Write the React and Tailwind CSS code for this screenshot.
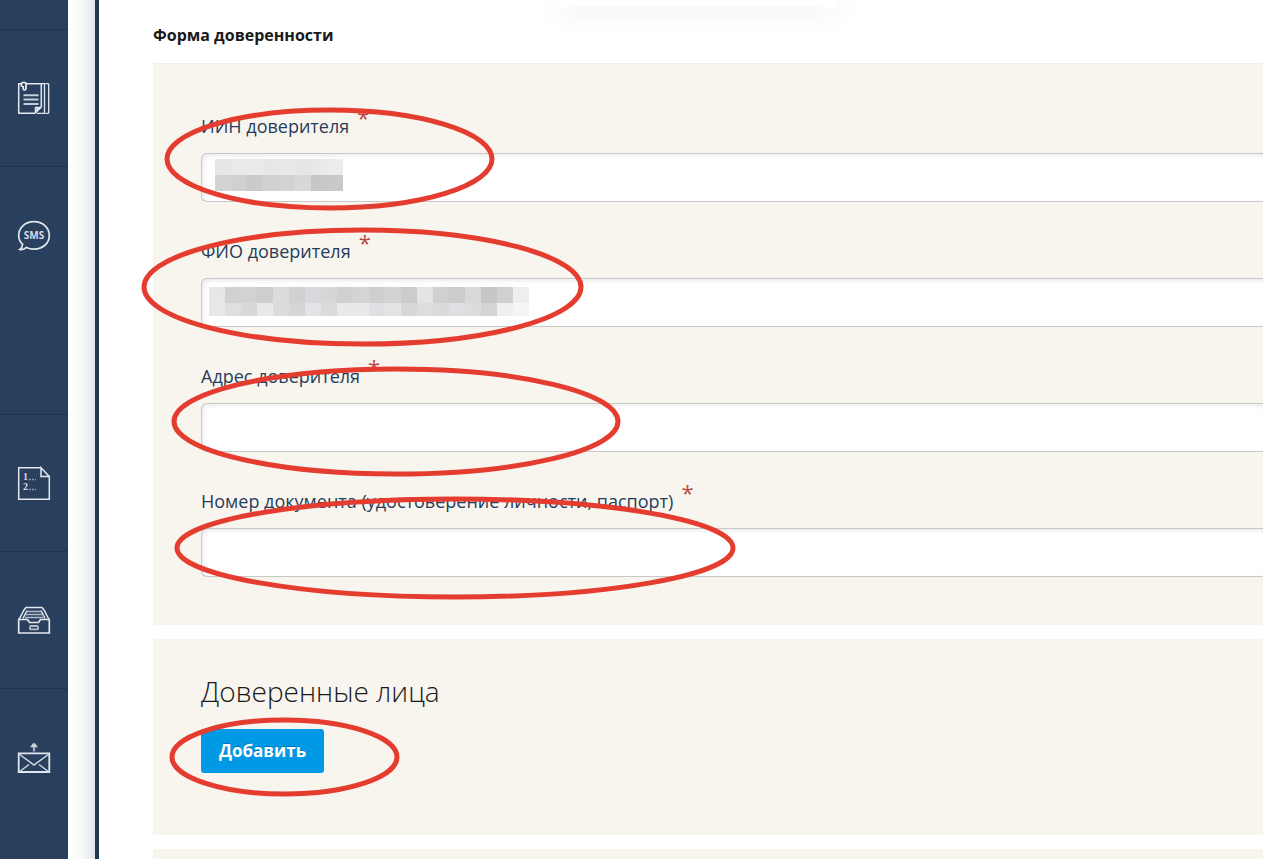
import clsx from "clsx";

const idTiles = [
  ["#e6e6e6", "#e9ebea", "#ebebeb", "#e7e7e7", "#e9e9e9", "#e6e6e4", "#e9e9e9", "#ececec"],
  ["#d3d3d3", "#cfd1d0", "#cbcbca", "#d1d1d2", "#d3d3d3", "#d8d8d6", "#c7c7c8", "#c8c9cb"],
];

const nameTiles = [
  ["#e7e7e6", "#d1d1d1", "#d2d2d2", "#cecece", "#dddcda", "#d1d1d1", "#d8d9dc", "#d6d6d6", "#d0d0cf", "#d3d5d4", "#cfcfcf", "#d3d3d3", "#cccccc", "#e4e4e2", "#d0d0d0", "#cbccce", "#d9d9d9", "#c7c7c5", "#d0d0d0", "#eeeeee"],
  ["#e8e8e8", "#dfdfdf", "#d8d8d8", "#e7eae9", "#dddcda", "#d6d6d6", "#e2e3e6", "#dbdbdb", "#e9e9e9", "#e9e9e9", "#dfe0e3", "#e4e4e4", "#d8d7d5", "#dcdddd", "#dadada", "#dfe0e3", "#dbdddc", "#d5d4d2", "#eeeff1", "#f5f5f5"],
];

// hidden personal data
function Mosaic({ tiles, height, className }) {
  return (
    <svg
      className={clsx("absolute", className)}
      width={tiles[0].length * 16}
      height={height}
      shapeRendering="crispEdges"
    >
      {tiles.map((row, y) =>
        row.map((fill, x) => (
          <rect key={`${x}-${y}`} x={x * 16} y={y * 16} width="16" height="16" fill={fill} />
        ))
      )}
    </svg>
  );
}

// red marker around a field
function Ring({ width, height, className }) {
  return (
    <svg
      className={clsx("absolute pointer-events-none z-10", className)}
      width={width}
      height={height}
      fill="none"
    >
      <ellipse
        cx={width / 2}
        cy={height / 2}
        rx={width / 2 - 3}
        ry={height / 2 - 3}
        stroke="#e53c30"
        strokeWidth="5"
      />
    </svg>
  );
}

function Icon({ children }) {
  return (
    <svg width="34" height="36" viewBox="0 0 34 36" fill="none" stroke="#e3e8ee" strokeWidth="1.5">
      {children}
    </svg>
  );
}

function DocsIcon() {
  return (
    <Icon>
      <path d="M4 2.7H1.7V32.3H18L24.3 26V2.7H9" />
      <path d="M18.5 32V26.5H24" />
      <path d="M19 31.5L24 26.5L19.5 26.5Z" fill="#e3e8ee" stroke="none" />
      <path d="M20 32.3H27.5V2.7H24M31.7 2.7V32.3M28.5 2.7H31.7M28.5 32.3H31.7" strokeWidth="1.3" />
      <path d="M4.5 6V3C4.5 0.9 9 0.9 9 3V7.5C9 9.4 6.2 9.4 6.2 7.5V5" strokeWidth="1.8" />
      <path d="M6.5 14.3H21.5M6.5 18.5H21.5M6.5 23H21.5" stroke="#c6ced8" strokeWidth="2" />
    </Icon>
  );
}

function SmsIcon() {
  return (
    <Icon>
      <path d="M5.6 26.2C3 23.8 1.7 21 1.7 17.4C1.7 9.4 8.4 3.7 17 3.7S32.3 9.4 32.3 17.4S25.6 31.1 17 31.1C14.2 31.1 11.7 30.5 9.5 29.4C7.6 31.2 5.3 31.9 2.8 31.4C4.7 30.1 5.5 28.4 5.6 26.2Z" strokeWidth="1.7" />
      <text x="17" y="21" textAnchor="middle" fontSize="10" fontWeight="700" fill="#d5dce5" stroke="none">
        SMS
      </text>
    </Icon>
  );
}

function ListIcon() {
  return (
    <Icon>
      <path d="M24 1.7H1.7V33.3H32.3V10.5L24 1.7V10.5H32.3" />
      <g fill="#d5dce5" stroke="none" fontSize="10" fontWeight="700" className="font-['Liberation_Serif',serif]">
        <text x="6" y="14">1</text>
        <text x="6" y="24">2</text>
      </g>
      <path d="M12 13.5H19M12 23.5H19" stroke="#8c9aae" strokeDasharray="2 1" />
    </Icon>
  );
}

function TrayIcon() {
  return (
    <Icon>
      <path d="M1.7 16.5H10.5L12.5 19.5H21.5L23.5 16.5H32.3V30H1.7Z" strokeWidth="1.7" />
      <path d="M2 16.5L7 7L9 4.5H25L27 7L32 16.5" />
      <path d="M6 15.5L10 7.5M28 15.5L24 7.5" />
      <path d="M9.5 8.5H24.5M9 11.5H25M8 14.5H26" stroke="#b3bdca" strokeWidth="1.3" />
      <rect x="13" y="23" width="8" height="3.4" rx="1" stroke="#b3bdca" strokeWidth="1.8" />
    </Icon>
  );
}

function SendIcon() {
  return (
    <Icon>
      <path d="M1.7 13.3H32.3V32H1.7Z" strokeWidth="1.8" />
      <path d="M2 14L17 25L32 14M2 32L12 24.5M32 32L22 24.5" stroke="#d0d8e1" />
      <path d="M17 11.5V5" stroke="#9aa7b8" strokeWidth="2.4" />
      <path d="M13 7.2L16 3.3H18L21 7.2Z" fill="#c9d1db" stroke="none" />
    </Icon>
  );
}

function MenuItem({ label, tall, children }) {
  return (
    <li className={clsx("border-t border-[#1f3450]", tall ? "h-[248px]" : "h-[137px]")}>
      <a href="#" aria-label={label} className="flex h-[137px] items-center justify-center">
        {children}
      </a>
    </li>
  );
}

function Field({ id, label, children }) {
  return (
    <div className="relative">
      <label htmlFor={id} className="flex h-10 text-lg leading-[26px] text-[#263c5b]">
        {label}
        <span className="-mt-2 ml-2 text-[22px] leading-6 text-[#b94a48]">*</span>
      </label>
      <input
        id={id}
        type="text"
        className="block h-[49px] w-full rounded-l-md border border-r-0 border-[#c8c8c8] bg-white px-3 text-lg shadow-[inset_2px_2px_4px_rgba(0,0,0,0.08)]"
      />
      {children}
    </div>
  );
}

export default function App() {
  return (
    <div className="relative flex h-screen overflow-hidden bg-white font-['Open_Sans',sans-serif] text-[#1a1a1a]">
      <nav className="w-[68px] shrink-0 bg-[#293f5e] pt-[29px]">
        <ul>
          <MenuItem label="Документы">
            <DocsIcon />
          </MenuItem>
          <MenuItem label="SMS" tall>
            <SmsIcon />
          </MenuItem>
          <MenuItem label="Список">
            <ListIcon />
          </MenuItem>
          <MenuItem label="Архив">
            <TrayIcon />
          </MenuItem>
          <MenuItem label="Отправить">
            <SendIcon />
          </MenuItem>
        </ul>
      </nav>
      <div className="w-[31px] shrink-0 border-r-4 border-[#213650] bg-linear-to-r from-white via-[#f7fafa] to-[#e0e7ee]" />

      <main className="min-w-0 flex-1 pl-[54px] pt-[23px]">
        <h1 className="mb-4 text-base font-bold leading-6">Форма доверенности</h1>

        <form onSubmit={(e) => e.preventDefault()} className="flex flex-col gap-3.5">
          <section className="flex flex-col gap-9 border-t border-dotted border-[#e8e8e8] bg-[#f8f5ee] pb-12 pl-12 pt-[49px]">
            <Field id="iin" label="ИИН доверителя">
              <Mosaic tiles={idTiles} height={32} className="left-3.5 top-[46px]" />
              <Ring width={331} height={104} className="-left-[37px] -top-1.5" />
            </Field>
            <Field id="fio" label="ФИО доверителя">
              <Mosaic tiles={nameTiles} height={29} className="left-2 top-[49px]" />
              <Ring width={443} height={120} className="-left-[60px] -top-[11px]" />
            </Field>
            <Field id="address" label="Адрес доверителя">
              <Ring width={450} height={111} className="-left-[30px] top-[3px]" />
            </Field>
            <Field id="document" label="Номер документа (удостоверение личности, паспорт)">
              <Ring width={562} height={104} className="-left-[27px] top-2" />
            </Field>
          </section>

          <section className="relative h-[196px] bg-[#f8f5ee] pl-12 pt-8">
            <h2 className="mb-[18px] text-[28px] font-light leading-10">Доверенные лица</h2>
            <button
              type="button"
              className="h-11 rounded-[3px] bg-[#0099e5] px-[18px] text-[17px] font-bold text-white [text-shadow:0_-1px_0_rgba(0,0,0,0.25)]"
            >
              Добавить
            </button>
            <Ring width={231} height={80} className="left-4 top-[78px]" />
          </section>

          <section className="h-[196px] bg-[#f8f5ee]" />
        </form>
      </main>

      <div className="absolute left-[558px] top-0 h-[7px] w-[279px] bg-white shadow-[0_0_28px_rgba(50,80,120,0.18)]" />
    </div>
  );
}
